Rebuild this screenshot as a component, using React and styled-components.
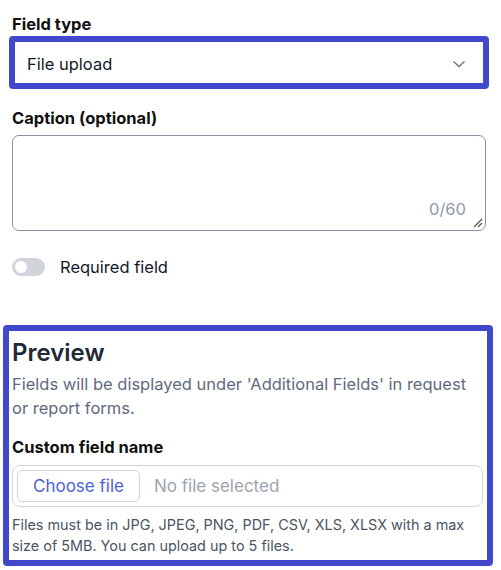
import React from "react";
import styled, { createGlobalStyle } from "styled-components";

const GlobalStyle = createGlobalStyle`
  body {
    margin: 0;
    background: #fff;
    font-family: Inter, "Noto Sans", sans-serif;
    color: #111827;
  }
`;

const Page = styled.div`
  width: 501px;
  padding: 12px 15px 0 12px;
  box-sizing: border-box;
`;

const Label = styled.div`
  font-size: 16.5px;
  line-height: 24px;
  font-weight: 700;
  color: #111;
`;

const SelectBox = styled.div`
  margin: 0 -3px 0 -3px;
  height: 53px;
  box-sizing: border-box;
  border: 6px solid #4148cc;
  border-radius: 4px;
  display: flex;
  align-items: center;
  justify-content: space-between;
  padding: 2px 16px 0 12px;
  font-size: 16.5px;
  color: #111827;
`;

const FieldGroup = styled.div`
  margin-top: ${(p) => p.$top || 0}px;
`;

const TextBox = styled.div`
  margin-top: 5px;
  height: 96px;
  box-sizing: border-box;
  border: 1px solid #8792a5;
  border-radius: 7px;
  position: relative;
  display: flex;
  align-items: flex-end;
  justify-content: flex-end;
  padding: 0 19px 11px 0;
`;

const Counter = styled.span`
  font-size: 16.5px;
  line-height: 20px;
  color: #8e99ad;
`;

const Grip = styled.svg`
  position: absolute;
  right: 2px;
  bottom: 2px;
`;

const ToggleRow = styled.div`
  margin-top: 24px;
  display: flex;
  align-items: center;
  gap: 15px;
  font-size: 16.5px;
  line-height: 24px;
  color: #111827;
`;

const Toggle = styled.span`
  width: 33px;
  height: 18px;
  border-radius: 9px;
  background: #d1d5db;
  position: relative;
  &::after {
    content: "";
    position: absolute;
    left: 3px;
    top: 3px;
    width: 12px;
    height: 12px;
    border-radius: 50%;
    background: #fff;
  }
`;

const Preview = styled.section`
  margin: 46px -7px 0 -9px;
  border: 6px solid #4148cc;
  border-radius: 4px;
  padding: 4px 4px 4px 3px;
`;

const Heading = styled.h2`
  margin: 0;
  font-size: 24px;
  line-height: 36px;
  font-weight: 600;
  color: #1f2937;
`;

const Description = styled.p`
  margin: 1px 0 0;
  font-size: 16.5px;
  line-height: 24px;
  color: #5f6b7d;
`;

const FileInput = styled.div`
  margin-top: 6px;
  height: 42px;
  box-sizing: border-box;
  border: 1px solid #d1d5db;
  border-radius: 8px;
  display: flex;
  align-items: center;
  padding: 0 4px;
  gap: 14px;
`;

const ChooseButton = styled.span`
  height: 32px;
  box-sizing: border-box;
  border: 1px solid #d1d5db;
  border-radius: 5px;
  padding: 0 15px;
  display: flex;
  align-items: center;
  font-size: 17px;
  color: #4b5fd6;
`;

const NoFile = styled.span`
  font-size: 17px;
  color: #9ca3af;
`;

const Help = styled.p`
  margin: 7px 0 0;
  font-size: 14.4px;
  line-height: 21px;
  color: #4b5563;
`;

export default function App() {
  return (
    <>
      <GlobalStyle />
      <Page>
        <Label>Field type</Label>
        <SelectBox>
          <span>File upload</span>
          <svg width="16" height="16" viewBox="0 0 16 16" fill="none">
            <path d="M2.5 5.5 8 10.5 13.5 5.5" stroke="#6b7280" strokeWidth="1.4" />
          </svg>
        </SelectBox>

        <FieldGroup $top={17}>
          <Label>Caption (optional)</Label>
          <TextBox>
            <Counter>0/60</Counter>
            <Grip width="10" height="10" viewBox="0 0 10 10">
              <path d="M9 1 1 9M9 5 5 9" stroke="#555" strokeWidth="1.2" />
            </Grip>
          </TextBox>
        </FieldGroup>

        <ToggleRow>
          <Toggle />
          <span>Required field</span>
        </ToggleRow>

        <Preview>
          <Heading>Preview</Heading>
          <Description>
            Fields will be displayed under 'Additional Fields' in request or
            report forms.
          </Description>
          <FieldGroup $top={15}>
            <Label>Custom field name</Label>
            <FileInput>
              <ChooseButton>Choose file</ChooseButton>
              <NoFile>No file selected</NoFile>
            </FileInput>
          </FieldGroup>
          <Help>
            Files must be in JPG, JPEG, PNG, PDF, CSV, XLS, XLSX with a max
            size of 5MB. You can upload up to 5 files.
          </Help>
        </Preview>
      </Page>
    </>
  );
}
